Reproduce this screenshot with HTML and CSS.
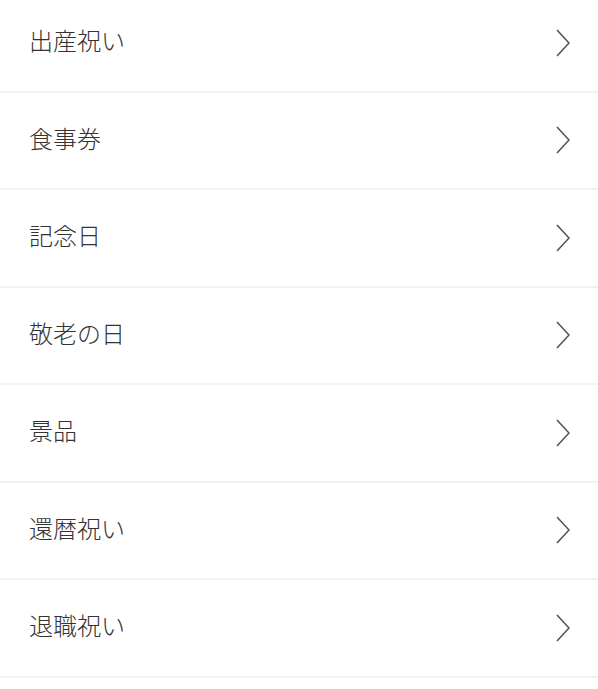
FILE: index.html
```html
<!DOCTYPE html>
<html lang="ja">
<head>
    <meta charset="UTF-8">
    <meta name="viewport" content="width=device-width, initial-scale=1.0">
    <title>シーン別ギフト</title>
    <link rel="stylesheet" href="styles.css">
</head>
<body>
    <ul class="scene-list">
        <li><a href="#"><span class="label">出産祝い</span><svg class="chevron" viewBox="0 0 14 28"><path d="M1 1 L13 14 L1 27"/></svg></a></li>
        <li><a href="#"><span class="label">食事券</span><svg class="chevron" viewBox="0 0 14 28"><path d="M1 1 L13 14 L1 27"/></svg></a></li>
        <li><a href="#"><span class="label">記念日</span><svg class="chevron" viewBox="0 0 14 28"><path d="M1 1 L13 14 L1 27"/></svg></a></li>
        <li><a href="#"><span class="label">敬老の日</span><svg class="chevron" viewBox="0 0 14 28"><path d="M1 1 L13 14 L1 27"/></svg></a></li>
        <li><a href="#"><span class="label">景品</span><svg class="chevron" viewBox="0 0 14 28"><path d="M1 1 L13 14 L1 27"/></svg></a></li>
        <li><a href="#"><span class="label">還暦祝い</span><svg class="chevron" viewBox="0 0 14 28"><path d="M1 1 L13 14 L1 27"/></svg></a></li>
        <li><a href="#"><span class="label">退職祝い</span><svg class="chevron" viewBox="0 0 14 28"><path d="M1 1 L13 14 L1 27"/></svg></a></li>
    </ul>
</body>
</html>
```

FILE: styles.css
```css
body {
    margin: 0;
    padding: 0;
    background-color: #fff;
    font-family: "Noto Sans CJK JP", "Noto Sans", sans-serif;
    overflow: hidden;
}
.scene-list {
    list-style: none;
    margin: -5px 0 0 0;
    padding: 0;
}
.scene-list li {
    border-bottom: 2px solid #f2f2f2;
}
.scene-list a {
    display: flex;
    align-items: center;
    justify-content: space-between;
    height: 95.5px;
    padding: 0 28px 0 29px;
    color: #333;
    text-decoration: none;
}
.label {
    font-size: 24px;
    font-weight: 300;
    line-height: 1;
    margin-top: -5px;
}
.chevron {
    width: 14px;
    height: 28px;
    fill: none;
    stroke: #555;
    stroke-width: 1.6;
}
```
